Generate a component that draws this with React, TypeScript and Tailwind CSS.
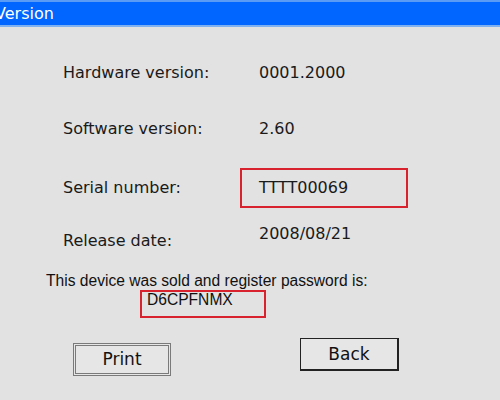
export default function App() {
  const rows = [
    { label: "Hardware version:", value: "0001.2000", pt: "pt-[37px]" },
    { label: "Software version:", value: "2.60", pt: "pt-[38px]" },
  ];

  return (
    <div className="flex h-[400px] w-[500px] flex-col overflow-hidden bg-[#e2e2e2] font-['DejaVu_Sans',sans-serif] text-[#1a1a1a]">
      <div className="h-[2px] bg-[#5a9cf5]" />
      <div className="flex h-[23px] items-center bg-[#0066ff] text-[16px] leading-none text-white">
        <span className="-ml-[5px]">Version</span>
      </div>
      <div className="h-[2px] bg-[#7fb0f0]" />

      <div className="flex flex-col pl-[63px]">
        {rows.map((r) => (
          <div key={r.label} className={`flex ${r.pt} text-[16px] leading-[18px]`}>
            <span className="w-[196px]">{r.label}</span>
            <span>{r.value}</span>
          </div>
        ))}

        <div className="mt-[30px] flex items-center text-[16px] leading-[18px]">
          <span className="w-[177px]">Serial number:</span>
          <div className="flex h-[40px] w-[168px] items-center border-[2px] border-[#d8232f] pl-[17px]">
            TTTT00069
          </div>
        </div>

        <div className="mt-[17px] flex text-[16px] leading-[18px]">
          <span className="mt-[7px] w-[196px]">Release date:</span>
          <span>2008/08/21</span>
        </div>
      </div>

      <div className="mt-[22px] pl-[46px] font-['Liberation_Sans',sans-serif] text-[15.6px] leading-[17px] text-[#111]">
        This device was sold and register password is:
      </div>
      <div className="ml-[140px] mt-[1px] flex h-[28px] w-[126px] items-start border-[2px] border-[#d8232f] pl-[5px] font-['Liberation_Sans',sans-serif] text-[15.6px] leading-[15px] text-[#111]">
        D6CPFNMX
      </div>

      <div className="mt-[20px] flex items-start pl-[73px]">
        <button className="mt-[5px] flex h-[33px] w-[98px] items-center justify-center border-[3px] border-double border-[#7a7a7a] bg-[#e6e6e6] text-[17px] leading-none text-[#111]">
          Print
        </button>
        <button className="ml-[129px] flex h-[33px] w-[99px] items-center justify-center border border-b-2 border-r-2 border-[#222] bg-[#e6e6e6] text-[17px] leading-none text-[#111]">
          Back
        </button>
      </div>
    </div>
  );
}
